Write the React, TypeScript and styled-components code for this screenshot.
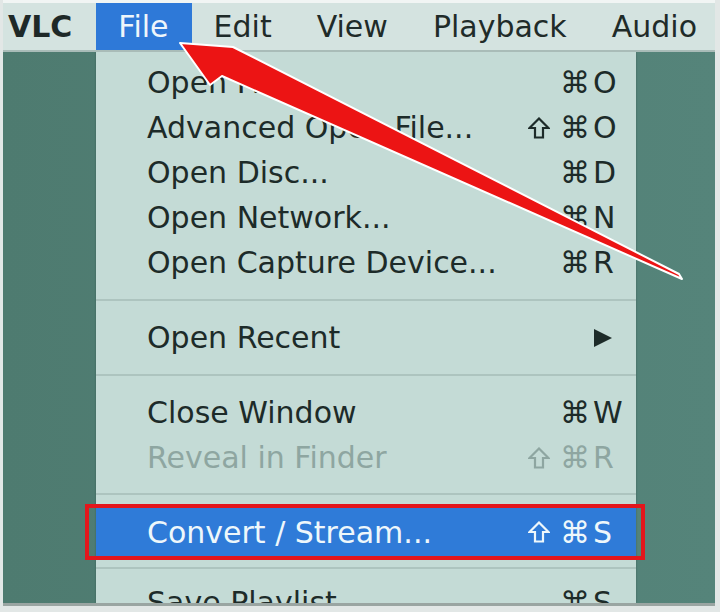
import React from "react";
import styled, { createGlobalStyle } from "styled-components";

const Global = createGlobalStyle`
  html, body { margin: 0; padding: 0; background: #e2e7e6; }
  body { font-family: "DejaVu Sans", "Liberation Sans", sans-serif; }
`;

const Page = styled.div`
  position: relative;
  width: 720px;
  height: 612px;
  overflow: hidden;
  background: #e2e7e6;
`;

const Frame = styled.div`
  margin: 0 5px 0 3px;
  display: flex;
  flex-direction: column;
  border-bottom: 3px solid #9aa5a2;
`;

const MenuBar = styled.div`
  height: 47px;
  display: flex;
  align-items: stretch;
  padding-left: 5px;
  background: #d4e3e0;
  border-top: 3px solid #f1f5f4;
  border-bottom: 2px solid #a9bcb8;
`;

const AppName = styled.div`
  display: flex;
  align-items: center;
  padding-right: 24px;
  font-size: 30px;
  font-weight: 700;
  color: #1e2928;
`;

const BarItem = styled.div<{ $active?: boolean }>`
  display: flex;
  align-items: center;
  padding: 0 23px 0 22px;
  font-size: 30px;
  color: ${(p) => (p.$active ? "#eef6fb" : "#1f2b29")};
  background: ${(p) => (p.$active ? "#2e79d8" : "transparent")};
`;

const Desk = styled.div`
  height: 551px;
  overflow: hidden;
  background: linear-gradient(90deg, #4e7b70 0%, #55847a 100%);
  display: flex;
`;

const Dropdown = styled.div`
  margin-left: 93px;
  width: 540px;
  padding-top: 8px;
  background: #c4dbd6;
  box-shadow: 0 0 2px rgba(0, 0, 0, 0.25);
  display: flex;
  flex-direction: column;
  flex-shrink: 0;
`;

const Row = styled.div<{ $selected?: boolean; $disabled?: boolean; $h?: number }>`
  position: relative;
  height: ${(p) => p.$h ?? 45}px;
  flex-shrink: 0;
  display: flex;
  align-items: center;
  padding: 0 10px 0 51px;
  font-size: 30px;
  color: ${(p) => (p.$selected ? "#eef7fb" : p.$disabled ? "#8ea6a1" : "#1d2b29")};
  background: ${(p) => (p.$selected ? "#2f7bd8" : "transparent")};
`;

const Label = styled.span`
  flex: 1;
  white-space: nowrap;
`;

const Mods = styled.span`
  display: flex;
  align-items: center;
  font-family: "DejaVu Sans", sans-serif;
  font-size: 30px;
  margin-right: 3px;
  white-space: nowrap;
`;

const ShiftIcon = styled.svg`
  width: 22px;
  height: 22px;
  margin-right: 10px;
`;

const Key = styled.span`
  width: 33px;
  font-size: 30px;
  text-align: left;
  display: flex;
  align-items: center;
`;

const Separator = styled.div<{ $h: number }>`
  height: ${(p) => p.$h}px;
  flex-shrink: 0;
  display: flex;
  align-items: center;
  &::after {
    content: "";
    flex: 1;
    height: 2px;
    background: #adc4bf;
  }
`;

const Highlight = styled.div`
  position: absolute;
  left: -11px;
  right: -9px;
  top: -4px;
  bottom: -4px;
  border: 4px solid #e3161c;
  pointer-events: none;
`;

const Overlay = styled.svg`
  position: absolute;
  left: 0;
  top: 0;
  pointer-events: none;
`;

type Item = { label: string; shift?: boolean; cmd?: boolean; key?: string; disabled?: boolean; submenu?: boolean };

const Shift = () => (
  <ShiftIcon viewBox="0 0 22 22">
    <path
      d="M11 1.5 L20.5 11 L15 11 L15 20.5 L7 20.5 L7 11 L1.5 11 Z"
      fill="none"
      stroke="currentColor"
      strokeWidth="2.2"
      strokeLinejoin="miter"
    />
  </ShiftIcon>
);

const MenuRow = ({ item, selected, h }: { item: Item; selected?: boolean; h?: number }) => (
  <Row $selected={selected} $disabled={item.disabled} $h={h}>
    <Label>{item.label}</Label>
    {(item.shift || item.cmd) && (
      <Mods>
        {item.shift && <Shift />}
        {item.cmd && "⌘"}
      </Mods>
    )}
    <Key>
      {item.submenu ? (
        <svg width="20" height="20" viewBox="0 0 20 20">
          <polygon points="1,1 19,10 1,19" fill="#1d2b29" />
        </svg>
      ) : (
        item.key
      )}
    </Key>
    {selected && <Highlight />}
  </Row>
);

const openItems: Item[] = [
  { label: "Open File...", cmd: true, key: "O" },
  { label: "Advanced Open File...", shift: true, cmd: true, key: "O" },
  { label: "Open Disc...", cmd: true, key: "D" },
  { label: "Open Network...", cmd: true, key: "N" },
  { label: "Open Capture Device...", cmd: true, key: "R" },
];

export default function App() {
  return (
    <Page>
      <Global />
      <Frame>
        <MenuBar>
          <AppName>VLC</AppName>
          <BarItem $active>File</BarItem>
          <BarItem>Edit</BarItem>
          <BarItem>View</BarItem>
          <BarItem>Playback</BarItem>
          <BarItem>Audio</BarItem>
        </MenuBar>
        <Desk>
          <Dropdown>
            {openItems.map((it) => (
              <MenuRow key={it.label} item={it} />
            ))}
            <Separator $h={30} />
            <MenuRow item={{ label: "Open Recent", submenu: true }} />
            <Separator $h={30} />
            <MenuRow item={{ label: "Close Window", cmd: true, key: "W" }} />
            <MenuRow item={{ label: "Reveal in Finder", shift: true, cmd: true, key: "R", disabled: true }} />
            <Separator $h={28} />
            <MenuRow item={{ label: "Convert / Stream...", shift: true, cmd: true, key: "S" }} selected h={48} />
            <Separator $h={24} />
            <MenuRow item={{ label: "Save Playlist", cmd: true, key: "S" }} />
          </Dropdown>
        </Desk>
      </Frame>
      <Overlay width="720" height="612" viewBox="0 0 720 612">
        <polygon
          points="180,43 233,47 679,274 682,279 222,76 210,85"
          fill="#ec1414"
          stroke="#ffffff"
          strokeWidth="2"
          strokeLinejoin="round"
        />
      </Overlay>
    </Page>
  );
}
